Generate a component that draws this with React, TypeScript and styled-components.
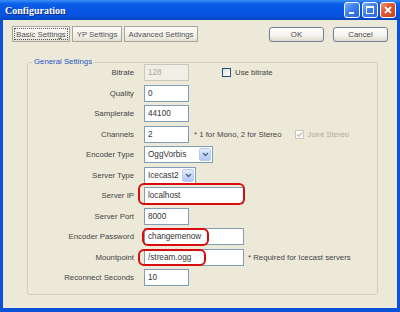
import React from 'react'
import { styled, createGlobalStyle } from 'styled-components'

const GlobalStyle = createGlobalStyle`
  html, body {
    margin: 0;
    padding: 0;
    background: #fff;
  }
  body {
    font-family: 'Liberation Sans', Arial, sans-serif;
  }
  * {
    box-sizing: border-box;
  }
`

const Window = styled.div`
  width: 400px;
  height: 312px;
  display: flex;
  flex-direction: column;
  background: #0b52d9;
  overflow: hidden;
`

const TitleBar = styled.div`
  height: 20px;
  flex: none;
  display: flex;
  align-items: center;
  padding: 0 4px 0 5px;
  background: linear-gradient(180deg, #3d8ef6 0%, #0d60e9 18%, #0556e4 50%, #0752dc 82%, #0645bd 100%);
`

const Title = styled.div`
  flex: 1;
  color: #fff;
  font-family: 'Liberation Serif', 'Times New Roman', serif;
  font-weight: 700;
  font-size: 10px;
  text-shadow: 1px 1px 0 #0a2a8a;
`

const CaptionButtons = styled.div`
  display: flex;
  gap: 2px;
`

const CaptionButton = styled.div<{ $close?: boolean }>`
  width: 16px;
  height: 16px;
  border: 1px solid #fff;
  border-radius: 3px;
  display: flex;
  align-items: center;
  justify-content: center;
  background: ${(p) =>
    p.$close
      ? 'linear-gradient(135deg, #f0936e 0%, #e0552c 45%, #c8401c 100%)'
      : 'linear-gradient(135deg, #7ab0fb 0%, #3e7ff2 45%, #2a63dc 100%)'};
`

const Client = styled.div`
  flex: 1;
  margin: 0 3px 4px;
  background: #ece9d8;
  display: flex;
  flex-direction: column;
`

const Toolbar = styled.div`
  display: flex;
  align-items: flex-end;
  justify-content: space-between;
  padding: 6px 9px 0 9px;
`

const ButtonGroup = styled.div<{ $gap: number }>`
  display: flex;
  align-items: flex-end;
  gap: ${(p) => p.$gap}px;
`

const TabButton = styled.div<{ $width: number; $active?: boolean }>`
  width: ${(p) => p.$width}px;
  height: 16px;
  display: flex;
  align-items: center;
  justify-content: center;
  font-size: 7.8px;
  color: #555;
  border: 1px solid #a7a69c;
  background: linear-gradient(180deg, #fbfbf8 0%, #f0efe6 70%, #e2dfd2 100%);
  outline: ${(p) => (p.$active ? '1px dotted #555' : 'none')};
  outline-offset: -3px;
`

const DialogButton = styled.div`
  width: 55px;
  height: 15px;
  display: flex;
  align-items: center;
  justify-content: center;
  font-size: 7.8px;
  color: #444;
  border: 1px solid #6f7f98;
  border-radius: 3px;
  background: linear-gradient(180deg, #ffffff 0%, #f4f3ee 60%, #dcd8cb 100%);
`

const Group = styled.div`
  position: relative;
  margin: 20px 19px 0 24px;
  border: 1px solid #d0d0bf;
  border-radius: 3px;
  padding: 1px 0 8px 0;
  display: grid;
  grid-template-columns: 106px 1fr;
  grid-auto-rows: 17px;
  column-gap: 10px;
  row-gap: 3.5px;
  align-items: center;
`

const Legend = styled.div`
  position: absolute;
  top: -6px;
  left: 4px;
  padding: 0 2px;
  background: #ece9d8;
  color: #2556c6;
  font-size: 7.8px;
  line-height: 10px;
`

const Label = styled.div`
  text-align: right;
  white-space: nowrap;
  font-size: 7.8px;
  color: #444;
`

const Field = styled.div`
  display: flex;
  align-items: center;
  height: 17px;
`

const TextBox = styled.input<{ $width: number }>`
  width: ${(p) => p.$width}px;
  height: 17px;
  margin: 0;
  padding: 0 0 0 3px;
  border: 1px solid #7f9db9;
  background: #fff;
  font-family: 'Liberation Sans', Arial, sans-serif;
  font-size: 8.2px;
  color: #333;
  outline: none;

  &:disabled {
    border-color: #c9c7ba;
    background: #f0efe5;
    color: #aca899;
  }
`

const Select = styled.div<{ $width: number }>`
  width: ${(p) => p.$width}px;
  height: 17px;
  display: flex;
  align-items: stretch;
  border: 1px solid #7f9db9;
  background: #fff;
  padding: 1px;
`

const SelectText = styled.div`
  flex: 1;
  display: flex;
  align-items: center;
  padding-left: 2px;
  font-size: 8.2px;
  color: #333;
`

const SelectArrow = styled.div`
  width: 12px;
  display: flex;
  align-items: center;
  justify-content: center;
  border: 1px solid #b8cbf4;
  border-radius: 2px;
  background: linear-gradient(180deg, #e3ebfd 0%, #c5d6fa 60%, #b2c6f4 100%);
`

const Note = styled.span<{ $gap: number }>`
  margin-left: ${(p) => p.$gap}px;
  font-size: 7.8px;
  color: #444;
  white-space: nowrap;
`

const Check = styled.div<{ $gap: number; $disabled?: boolean }>`
  margin-left: ${(p) => p.$gap}px;
  display: flex;
  align-items: center;
  gap: 4px;
  font-size: 7.8px;
  white-space: nowrap;
  color: ${(p) => (p.$disabled ? '#b0ad9f' : '#444')};
`

const CheckBox = styled.div<{ $disabled?: boolean }>`
  width: 9px;
  height: 9px;
  display: flex;
  align-items: center;
  justify-content: center;
  border: 1px solid ${(p) => (p.$disabled ? '#c9c7ba' : '#1c5180')};
  background: ${(p) =>
    p.$disabled ? '#fff' : 'linear-gradient(135deg, #dcdcd7 0%, #f4f4f0 60%, #ffffff 100%)'};
`

const Marked = styled.div`
  position: relative;
  display: flex;
`

const RedMark = styled.div<{ $left: number; $top: number; $w: number; $h: number }>`
  position: absolute;
  left: ${(p) => p.$left}px;
  top: ${(p) => p.$top}px;
  width: ${(p) => p.$w}px;
  height: ${(p) => p.$h}px;
  border: 2px solid #d80c0c;
  border-radius: 6px;
  pointer-events: none;
`

const Chevron = () => (
  <svg width='7' height='5' viewBox='0 0 7 5'>
    <polyline points='1,1 3.5,3.5 6,1' fill='none' stroke='#4d6185' strokeWidth='1.4' />
  </svg>
)

const Tick = ({ color }: { color: string }) => (
  <svg width='7' height='7' viewBox='0 0 7 7'>
    <polyline points='1,3.5 2.8,5.3 6,1.5' fill='none' stroke={color} strokeWidth='1.3' />
  </svg>
)

const App = () => {
  return (
    <>
      <GlobalStyle />
      <Window>
        <TitleBar>
          <Title>Configuration</Title>
          <CaptionButtons>
            <CaptionButton>
              <svg width='10' height='10' viewBox='0 0 10 10'>
                <rect x='2' y='7' width='5' height='2' fill='#fff' />
              </svg>
            </CaptionButton>
            <CaptionButton>
              <svg width='10' height='10' viewBox='0 0 10 10'>
                <rect x='1.5' y='1.5' width='7' height='7' fill='none' stroke='#fff' strokeWidth='1' />
                <rect x='1' y='1' width='8' height='2' fill='#fff' />
              </svg>
            </CaptionButton>
            <CaptionButton $close>
              <svg width='10' height='10' viewBox='0 0 10 10'>
                <path d='M2 2 L8 8 M8 2 L2 8' stroke='#fff' strokeWidth='1.8' />
              </svg>
            </CaptionButton>
          </CaptionButtons>
        </TitleBar>
        <Client>
          <Toolbar>
            <ButtonGroup $gap={2}>
              <TabButton $width={58} $active>Basic Settings</TabButton>
              <TabButton $width={50}>YP Settings</TabButton>
              <TabButton $width={74}>Advanced Settings</TabButton>
            </ButtonGroup>
            <ButtonGroup $gap={9}>
              <DialogButton>OK</DialogButton>
              <DialogButton>Cancel</DialogButton>
            </ButtonGroup>
          </Toolbar>

          <Group>
            <Legend>General Settings</Legend>

            <Label>Bitrate</Label>
            <Field>
              <TextBox $width={45} defaultValue='128' disabled />
              <Check $gap={33}>
                <CheckBox />
                Use bitrate
              </Check>
            </Field>

            <Label>Quality</Label>
            <Field>
              <TextBox $width={45} defaultValue='0' readOnly />
            </Field>

            <Label>Samplerate</Label>
            <Field>
              <TextBox $width={45} defaultValue='44100' readOnly />
            </Field>

            <Label>Channels</Label>
            <Field>
              <TextBox $width={45} defaultValue='2' readOnly />
              <Note $gap={5}>* 1 for Mono, 2 for Stereo</Note>
              <Check $gap={13} $disabled>
                <CheckBox $disabled>
                  <Tick color='#c2bfb0' />
                </CheckBox>
                Joint Stereo
              </Check>
            </Field>

            <Label>Encoder Type</Label>
            <Field>
              <Select $width={69}>
                <SelectText>OggVorbis</SelectText>
                <SelectArrow>
                  <Chevron />
                </SelectArrow>
              </Select>
            </Field>

            <Label>Server Type</Label>
            <Field>
              <Select $width={52}>
                <SelectText>Icecast2</SelectText>
                <SelectArrow>
                  <Chevron />
                </SelectArrow>
              </Select>
            </Field>

            <Label>Server IP</Label>
            <Field>
              <Marked>
                <TextBox $width={100} defaultValue='localhost' readOnly />
                <RedMark $left={-6} $top={-4} $w={107} $h={22} />
              </Marked>
            </Field>

            <Label>Server Port</Label>
            <Field>
              <TextBox $width={45} defaultValue='8000' readOnly />
            </Field>

            <Label>Encoder Password</Label>
            <Field>
              <Marked>
                <TextBox $width={100} defaultValue='changemenow' readOnly />
                <RedMark $left={-2} $top={0} $w={67} $h={18} />
              </Marked>
            </Field>

            <Label>Mountpoint</Label>
            <Field>
              <Marked>
                <TextBox $width={100} defaultValue='/stream.ogg' readOnly />
                <RedMark $left={-6} $top={0} $w={68} $h={17} />
              </Marked>
              <Note $gap={4}>* Required for Icecast servers</Note>
            </Field>

            <Label>Reconnect Seconds</Label>
            <Field>
              <TextBox $width={45} defaultValue='10' readOnly />
            </Field>
          </Group>
        </Client>
      </Window>
    </>
  )
}

export default App
